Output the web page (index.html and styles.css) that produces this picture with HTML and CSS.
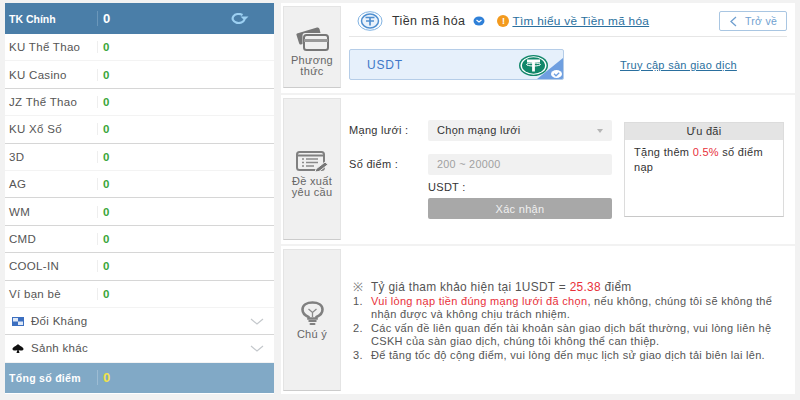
FILE: index.html
```html
<!DOCTYPE html>
<html lang="vi">
  <head>
    <meta charset="UTF-8" />
    <meta name="viewport" content="width=device-width, initial-scale=1.0" />
    <title>Tiền mã hóa</title>
    <link rel="stylesheet" href="styles.css">
  </head>
  <body>
    <div class="page">
      <aside class="sidebar">
        <div class="row row-main">
          <span class="row-name">TK Chính</span>
          <span class="row-val">0</span>
          <svg class="refresh" width="18" height="11" viewBox="0 0 18 11">
            <path d="M13.500 6.500a6 4.500 0 1 1-2-4.500" fill="none" stroke="#9cd0f2" stroke-width="2.200" />
            <path d="M9.500 3.500h8l-4 4z" fill="#9cd0f2" />
          </svg>
        </div>
        <div class="row"><span class="row-name">KU Thể Thao</span><span class="row-val">0</span></div>
        <div class="row row-sep"><span class="row-name">KU Casino</span><span class="row-val">0</span></div>
        <div class="row"><span class="row-name">JZ Thể Thao</span><span class="row-val">0</span></div>
        <div class="row row-sep"><span class="row-name">KU Xổ Số</span><span class="row-val">0</span></div>
        <div class="row"><span class="row-name">3D</span><span class="row-val">0</span></div>
        <div class="row row-sep"><span class="row-name">AG</span><span class="row-val">0</span></div>
        <div class="row row-sep"><span class="row-name">WM</span><span class="row-val">0</span></div>
        <div class="row row-sep"><span class="row-name">CMD</span><span class="row-val">0</span></div>
        <div class="row row-sep"><span class="row-name">COOL-IN</span><span class="row-val">0</span></div>
        <div class="row"><span class="row-name">Ví bạn bè</span><span class="row-val">0</span></div>
        <div class="row row-sep row-group">
          <svg class="group-icon" width="12" height="9" viewBox="0 0 12 9">
            <rect width="12" height="9" fill="#3c6fc0" />
            <rect x="1" y="1" width="5" height="3.500" fill="#dfe9f7" />
            <rect x="6" y="4.500" width="5" height="3.500" fill="#dfe9f7" />
          </svg>
          <span class="group-name">Đối Kháng</span>
          <svg class="chev" width="14" height="7" viewBox="0 0 14 7"><path d="M1 1l6 5 6-5" fill="none" stroke="#c4c8cc" stroke-width="1.200" /></svg>
        </div>
        <div class="row row-group">
          <svg class="group-icon" width="12" height="9" viewBox="0 0 12 9">
            <path d="M6 0C7.500 2 11.500 3 11.500 5 11.500 6.700 8.500 7 6.700 6L7.500 9H4.500L5.300 6C3.500 7 .5 6.700 .5 5 .5 3 4.500 2 6 0z" fill="#111" />
          </svg>
          <span class="group-name">Sảnh khác</span>
          <svg class="chev" width="14" height="7" viewBox="0 0 14 7"><path d="M1 1l6 5 6-5" fill="none" stroke="#c4c8cc" stroke-width="1.200" /></svg>
        </div>
        <div class="row row-total">
          <span class="row-name">Tổng số điểm</span>
          <span class="row-val">0</span>
        </div>
      </aside>

      <main class="content">
        <section class="panel panel-method">
          <div class="tile tile-low">
            <svg width="33" height="24" viewBox="0 0 33 24">
              <path d="M1 6.500L21 .5Q23 0 23.500 2L24.500 6H9Q6.500 6 6.500 8.500V17L5 17.500Q3.500 18 3 16L.5 8Q0 7 1 6.500z" fill="#777" />
              <rect x="8" y="8" width="24" height="15" rx="2.500" fill="none" stroke="#777" stroke-width="2" />
              <rect x="8" y="12" width="24" height="3" fill="#999" />
            </svg>
            <span>Phương<br>thức</span>
          </div>
          <div class="method-body">
            <div class="method-head">
              <svg class="coin-outline" width="26" height="20" viewBox="0 0 26 20">
                <ellipse cx="13" cy="10" rx="12" ry="9.300" fill="none" stroke="#7fb2e2" stroke-width="1" />
                <ellipse cx="13" cy="10" rx="8.500" ry="7" fill="#eaf2fb" stroke="#4f8fd0" stroke-width="1.500" />
                <path d="M8.500 6.500h9M13 6.500v8M9 10h8" stroke="#4f8fd0" stroke-width="1.700" fill="none" />
              </svg>
              <span class="method-title">Tiền mã hóa</span>
              <svg class="pick" width="12" height="10" viewBox="0 0 12 10">
                <ellipse cx="6" cy="5" rx="5.500" ry="4.500" fill="#2f80d8" />
                <path d="M3.500 4l2.500 2 2.500-2" fill="none" stroke="#fff" stroke-width="1.200" />
              </svg>
              <span class="warn">!</span>
              <a class="link link-learn">Tìm hiểu về Tiền mã hóa</a>
              <button class="back">
                <svg width="8" height="11" viewBox="0 0 8 11"><path d="M7 1L2 5.500 7 10" fill="none" stroke="#6f9fd0" stroke-width="1.300" /></svg>
                Trở về
              </button>
            </div>
            <div class="method-options">
              <div class="coin-card">
                <span>USDT</span>
                <span class="card-check">
                  <svg width="11" height="8" viewBox="0 0 11 8">
                    <ellipse cx="5.500" cy="4" rx="5.500" ry="4" fill="#fff" />
                    <path d="M3 3.800l2 2 3.200-3" fill="none" stroke="#6f9fe0" stroke-width="1.300" />
                  </svg>
                </span>
                <svg class="tether" width="29" height="21" viewBox="0 0 29 21">
                  <ellipse cx="14.500" cy="10.500" rx="14.500" ry="10.500" fill="#12876a" />
                  <ellipse cx="14.500" cy="10.500" rx="13" ry="9.300" fill="#fff" />
                  <ellipse cx="14.500" cy="10.500" rx="11.500" ry="8.200" fill="#12876a" />
                  <path d="M8 6h13M14.500 6v10.500" stroke="#fff" stroke-width="2.800" fill="none" />
                  <ellipse cx="14.500" cy="9.500" rx="7" ry="1.500" fill="none" stroke="#fff" stroke-width="1" />
                </svg>
              </div>
              <a class="link link-exchange">Truy cập sàn giao dịch</a>
            </div>
          </div>
        </section>

        <section class="panel panel-request">
          <div class="tile tile-low">
            <svg width="33" height="21" viewBox="0 0 33 21">
              <rect x="1" y="1" width="27" height="18" rx="2.500" fill="none" stroke="#808080" stroke-width="2" />
              <path d="M1 4.500h27" stroke="#808080" stroke-width="2" />
              <path d="M6 8h2M6 11.500h2M6 15h2M10 8h12M10 11.500h12M10 15h8" stroke="#8a8a8a" stroke-width="1.600" />
              <path d="M20 18l9-7 3 2.500-9 7-4 .5z" fill="#777" stroke="#f0f0f0" stroke-width="1" />
            </svg>
            <span>Đề xuất<br>yêu cầu</span>
          </div>
          <div class="form">
            <div class="form-row">
              <label>Mạng lưới :</label>
              <div class="select">Chọn mạng lưới<i class="caret"></i></div>
            </div>
            <div class="form-row">
              <label>Số điểm :</label>
              <div class="input">200 ~ 20000</div>
            </div>
            <div class="usdt-line">USDT :</div>
            <button class="submit">Xác nhận</button>
          </div>
          <div class="promo">
            <div class="promo-head">Ưu đãi</div>
            <div class="promo-body">Tặng thêm <em>0.5%</em> số điểm nạp</div>
          </div>
        </section>

        <section class="panel panel-note">
          <div class="tile">
            <svg width="23" height="24" viewBox="0 0 23 24">
              <path d="M7.500 17.500V16C4 14.500 1.500 12 1.500 8.500 1.500 4 6 1.500 11.500 1.500S21.500 4 21.500 8.500C21.500 12 19 14.500 15.500 16V17.500z" fill="none" stroke="#808080" stroke-width="2.600" />
              <path d="M7.500 8l4 3.500 4-3.500M11.500 11.500V16" fill="none" stroke="#8a8a8a" stroke-width="1.300" />
              <rect x="7.500" y="19" width="8" height="2" fill="#808080" />
              <rect x="8.500" y="22" width="6" height="2" rx="1" fill="#808080" />
            </svg>
            <span>Chú ý</span>
          </div>
          <div class="notes">
            <p><span class="ref-mark">※</span>Tỷ giá tham khảo hiện tại 1USDT = <em>25.38</em> điểm</p>
            <ol>
              <li><em>Vui lòng nạp tiền đúng mạng lưới đã chọn</em>, nếu không, chúng tôi sẽ không thể nhận được và không chịu trách nhiệm.</li>
              <li>Các vấn đề liên quan đến tài khoản sàn giao dịch bất thường, vui lòng liên hệ CSKH của sàn giao dịch, chúng tôi không thể can thiệp.</li>
              <li>Để tăng tốc độ cộng điểm, vui lòng đến mục lịch sử giao dịch tải biên lai lên.</li>
            </ol>
          </div>
        </section>
      </main>
    </div>
  </body>
</html>
```

FILE: styles.css
```css
html,
body {
  margin: 0;
  padding: 0;
  height: 400px;
  overflow: hidden;
}
body {
  font-family: "Liberation Sans", Arial, sans-serif;
  font-size: 11px;
  letter-spacing: 0.3px;
  background-color: #f2f2f2;
  color: #444;
}
em {
  font-style: normal;
  color: #e8303a;
}
.page {
  display: flex;
  gap: 7px;
  padding: 3px 5px 6px;
  height: 400px;
  box-sizing: border-box;
}

/* sidebar */
.sidebar {
  width: 269px;
  height: 391px;
  flex: none;
  display: flex;
  flex-direction: column;
  background-color: #fff;
}
.row {
  height: 27.4px;
  flex: none;
  box-sizing: border-box;
  display: flex;
  align-items: center;
  padding-left: 4px;
  border-bottom: 1px solid #f3f3f3;
  color: #555;
  font-size: 11.5px;
}
.row-sep {
  border-bottom: 1px solid #d6d6d6;
}
.row-name {
  width: 88px;
  flex: none;
}
.row-val {
  border-left: 1px solid #eee;
  padding-left: 5px;
  font-weight: bold;
  color: #3aa63a;
}
.row-main {
  height: 31px;
  background-color: #4a7ea8;
  border: none;
  color: #fff;
  font-weight: bold;
}
.row-main .row-name {
  font-size: 10.500px;
  letter-spacing: 0;
}
.row-main .row-val {
  color: #fff;
  font-size: 13px;
  border-left-color: #6b97ba;
}
.refresh {
  margin-left: 120px;
}
.row-group {
  padding-left: 7px;
}
.group-icon {
  flex: none;
}
.group-name {
  margin-left: 7px;
  flex: 1;
}
.chev {
  margin-right: 10px;
}
.row-total {
  height: 30px;
  background-color: #81a9c6;
  border: none;
  color: #fff;
  font-weight: bold;
}
.row-total .row-name {
  font-size: 10.500px;
}
.row-total .row-val {
  color: #f1e24a;
  font-size: 13px;
  border-left-color: #9dbcd3;
}

/* right column */
.content {
  width: 514px;
  flex: none;
  display: flex;
  flex-direction: column;
  gap: 2px;
}
.panel {
  background-color: #fff;
  padding: 3px 0 4px 2px;
  display: flex;
  box-sizing: border-box;
}
.panel-method {
  height: 90px;
  padding-bottom: 5px;
}
.panel-request {
  height: 149px;
}
.panel-note {
  height: 148px;
  padding-bottom: 3px;
}
.tile {
  width: 58px;
  flex: none;
  box-sizing: border-box;
  background-color: #f0f0f0;
  border: 1px solid #e4e4e4;
  border-bottom-color: #ccc;
  display: flex;
  flex-direction: column;
  align-items: center;
  justify-content: center;
  gap: 4px;
  text-align: center;
  font-size: 11px;
  line-height: 11px;
  color: #666;
}
.tile-low {
  padding-top: 10px;
}

/* payment method */
.method-body {
  flex: 1;
  padding-left: 8px;
  padding-right: 8px;
}
.method-head {
  height: 30px;
  display: flex;
  align-items: center;
  border-bottom: 1px solid #e6e6e6;
  padding-left: 8px;
}
.method-title {
  margin-left: 9px;
  font-size: 12.500px;
  letter-spacing: 0.4px;
  color: #333;
}
.pick {
  margin-left: 8px;
}
.warn {
  width: 12px;
  height: 12px;
  margin-left: 12px;
  border-radius: 50%;
  background-color: #f39a1e;
  color: #fff;
  font-size: 9px;
  line-height: 12px;
  font-weight: bold;
  text-align: center;
  letter-spacing: 0;
}
.link {
  color: #2a6f9e;
  text-decoration: underline;
}
.link-learn {
  margin-left: 3px;
  font-size: 11.800px;
}
.back {
  margin-left: auto;
  width: 68px;
  height: 20px;
  padding: 0;
  font-family: inherit;
  font-size: 10.500px;
  letter-spacing: 0.3px;
  color: #6f9fd0;
  background-color: #fff;
  border: 1px solid #a9c6e2;
  border-radius: 2px;
  display: flex;
  align-items: center;
  justify-content: center;
  gap: 8px;
}
.method-options {
  display: flex;
  align-items: center;
  margin-top: 12px;
}
.coin-card {
  width: 215px;
  height: 31px;
  box-sizing: border-box;
  background-color: #e6f0fb;
  border: 1px solid #b5cde8;
  border-radius: 2px;
  display: flex;
  align-items: center;
  padding-left: 17px;
  color: #3f78c8;
  font-size: 12px;
  letter-spacing: 0.8px;
  position: relative;
  overflow: hidden;
}
.tether {
  position: absolute;
  right: 15px;
  top: 5px;
}
.card-check {
  position: absolute;
  right: 0;
  bottom: 0;
  width: 0;
  height: 0;
  border-style: solid;
  border-width: 0 0 21px 26px;
  border-color: transparent transparent #6f9fe0 transparent;
}
.card-check svg {
  position: absolute;
  right: 1px;
  top: 12px;
}
.link-exchange {
  margin-left: 56px;
  font-size: 11px;
}

/* request form */
.form {
  width: 271px;
  flex: none;
  padding: 22px 0 0 8px;
  box-sizing: border-box;
  color: #333;
}
.form-row {
  display: flex;
  align-items: flex-start;
  margin-bottom: 13px;
}
.form-row label {
  width: 79px;
  flex: none;
  line-height: 21px;
}
.select,
.input {
  flex: 1;
  height: 21px;
  line-height: 21px;
  background-color: #f1f1f1;
  padding-left: 9px;
  border-radius: 2px;
  position: relative;
}
.input {
  color: #a0a0a0;
  font-size: 10.800px;
}
.caret {
  position: absolute;
  right: 9px;
  top: 9px;
  border-style: solid;
  border-width: 4px 3.500px 0;
  border-color: #b5b5b5 transparent transparent;
}
.usdt-line {
  margin: -10px 0 0 79px;
  height: 18px;
  line-height: 18px;
}
.submit {
  display: block;
  margin: 2px 0 0 79px;
  width: 184px;
  height: 21px;
  padding: 0;
  border: none;
  border-radius: 2px;
  font-family: inherit;
  font-size: 11px;
  letter-spacing: 0.3px;
  color: #f0f0f0;
  background-color: #a8a8a8;
}

/* promo */
.promo {
  width: 160px;
  height: 95px;
  margin: 24px 0 0 12px;
  box-sizing: border-box;
  border: 1px solid #dcdcdc;
  border-bottom-color: #c8c8c8;
  color: #333;
}
.promo-head {
  height: 17px;
  line-height: 17px;
  background-color: #e4e4e4;
  text-align: center;
}
.promo-body {
  padding: 5px 9px;
  line-height: 15px;
}

/* notes */
.notes {
  flex: 1;
  padding: 32px 20px 0 12px;
  line-height: 13.500px;
  color: #555;
}
.notes p {
  margin: 0;
  font-size: 11.900px;
}
.ref-mark {
  display: inline-block;
  width: 18px;
  color: #777;
}
.notes ol {
  margin: 0;
  padding: 0;
  list-style: none;
  counter-reset: note;
}
.notes li {
  padding-left: 18px;
  counter-increment: note;
}
.notes li::before {
  content: counter(note) ".";
  display: inline-block;
  width: 18px;
  margin-left: -18px;
}
```
